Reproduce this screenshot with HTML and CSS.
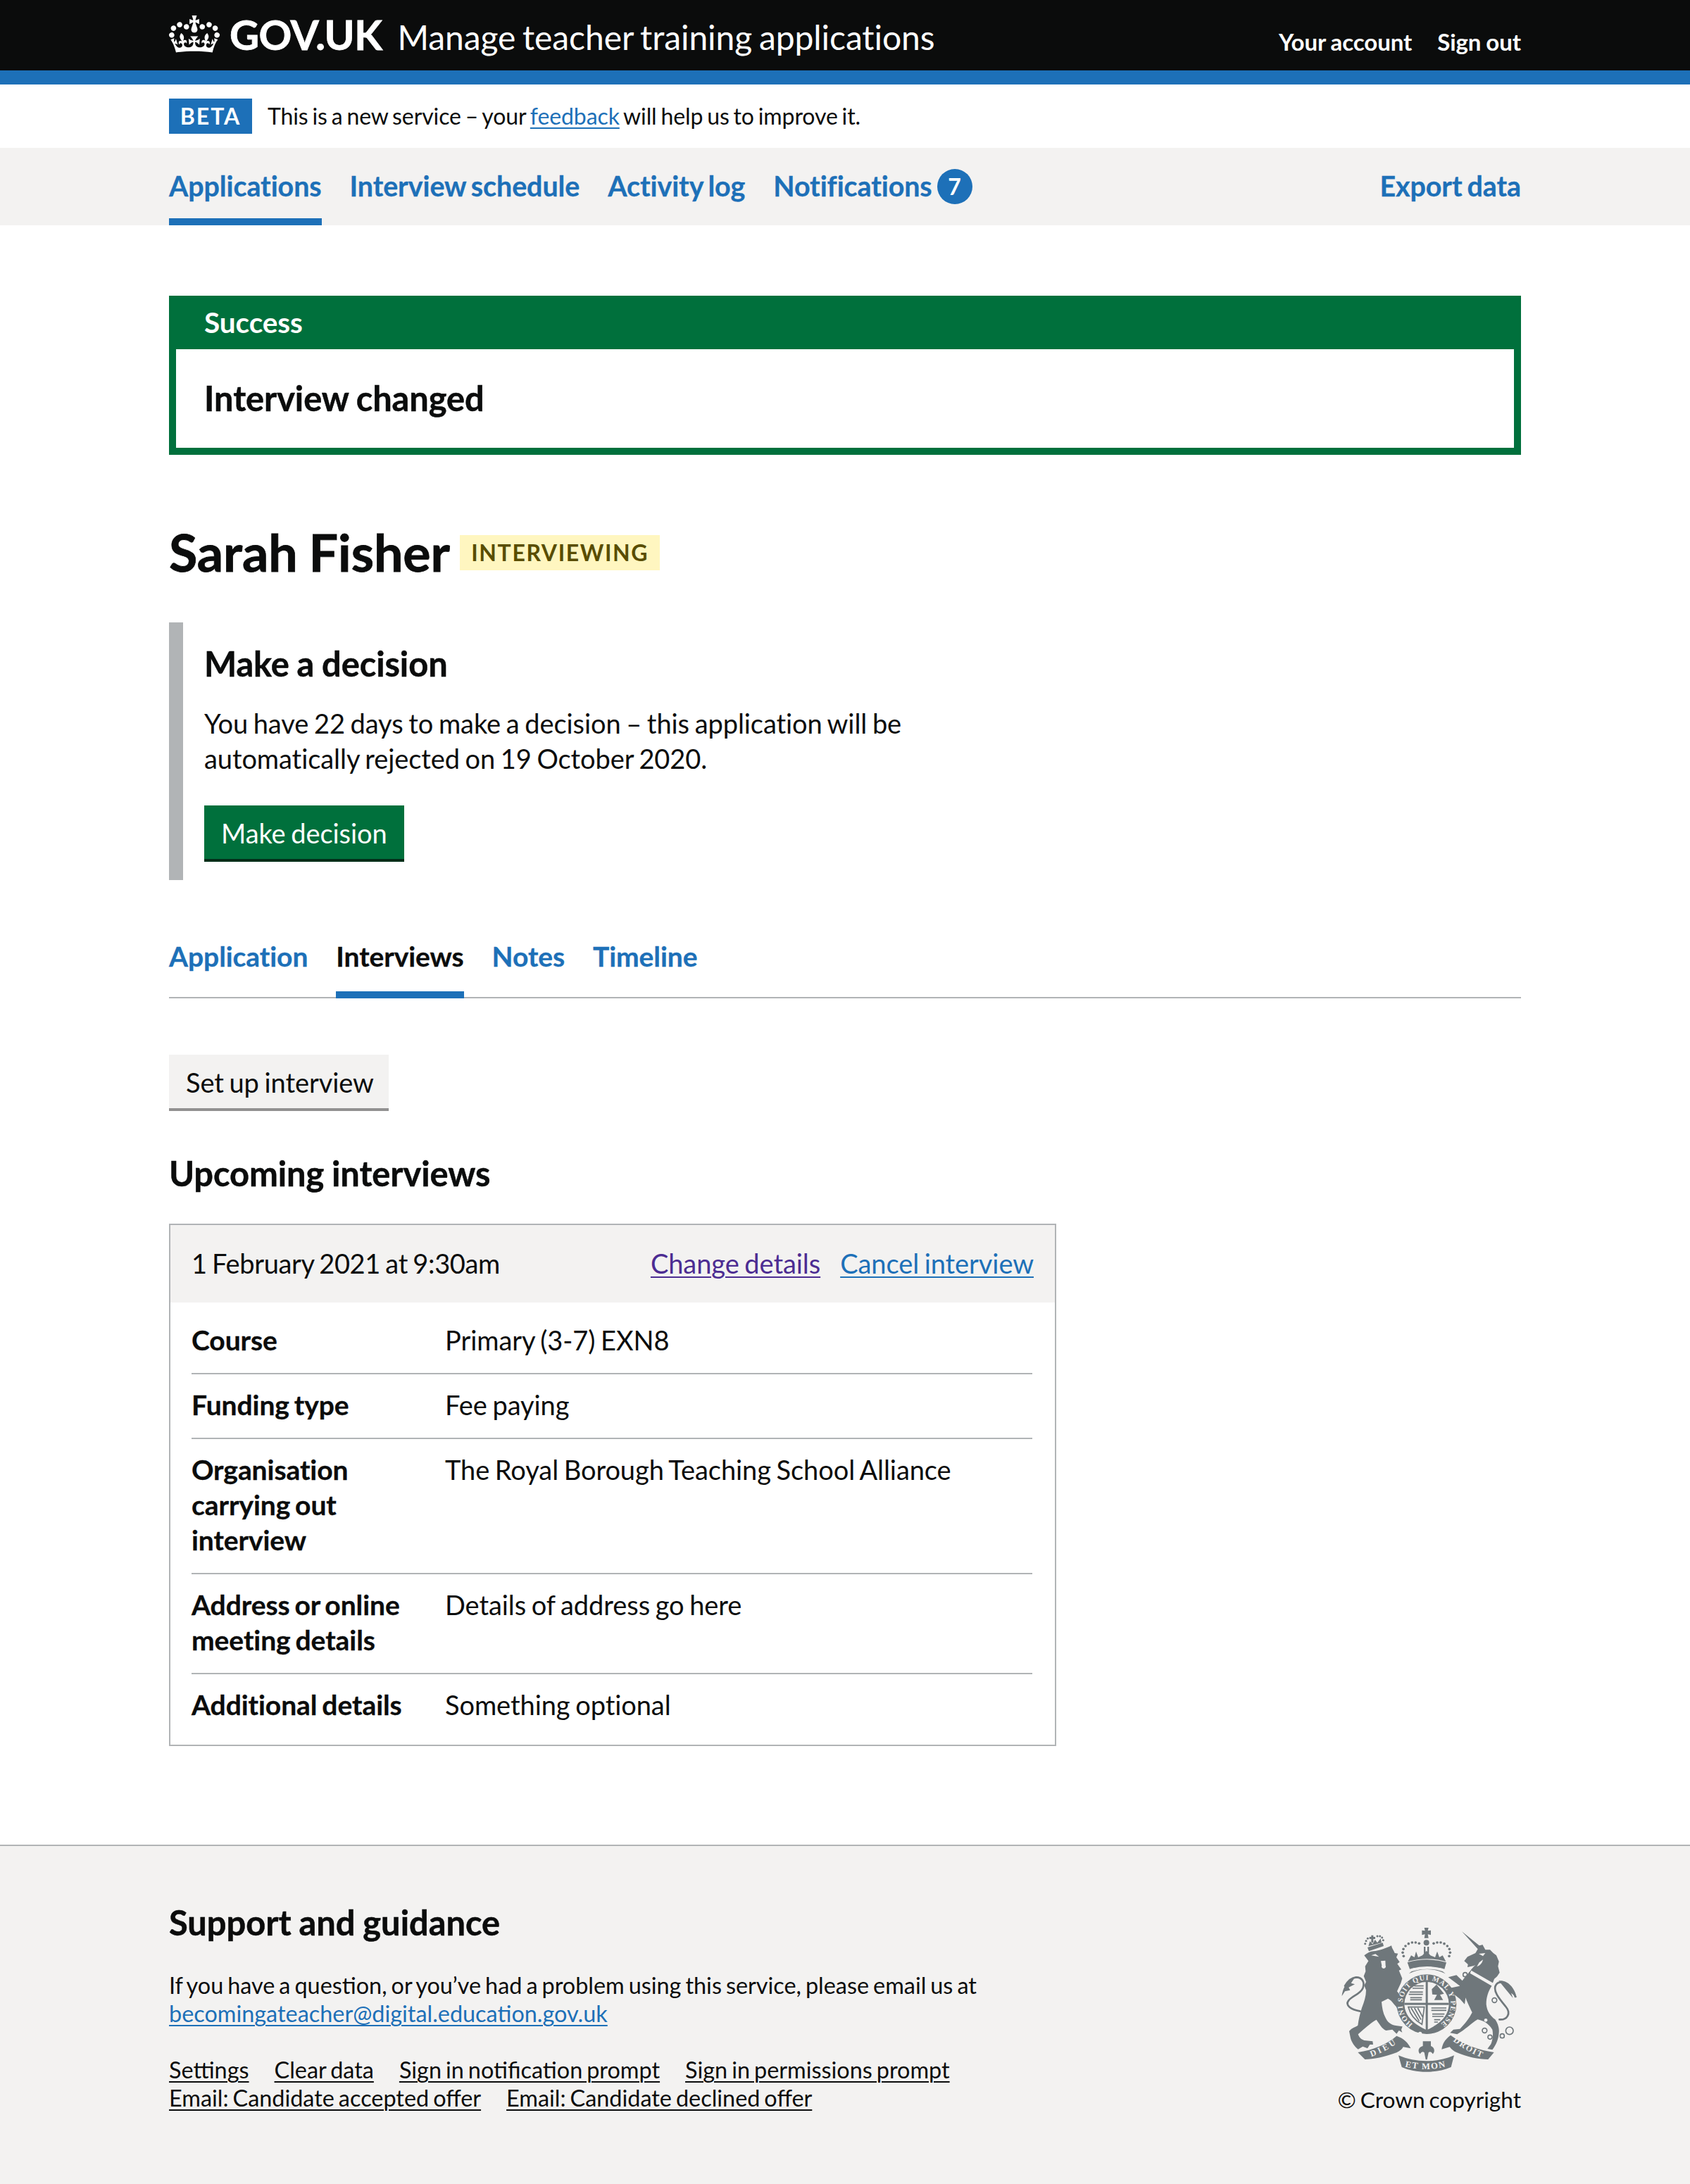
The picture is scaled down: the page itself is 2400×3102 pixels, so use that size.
FILE: index.html
```html
<!DOCTYPE html>
<html lang="en">
<head>
<meta charset="utf-8">
<title>Manage teacher training applications</title>
<link rel="stylesheet" href="styles.css">
</head>
<body>
<header class="header">
  <div class="wrap header-row">
    <div class="brand">
      <svg class="crown" viewBox="0 0 132 97" aria-hidden="true"><path fill="#fff" fill-rule="evenodd" d="M25 30.2c3.5 1.5 7.7-.2 9.1-3.7 1.5-3.6-.2-7.8-3.9-9.2-3.6-1.4-7.6.3-9.1 3.9-1.4 3.5.3 7.5 3.9 9zM9 39.5c3.6 1.5 7.8-.2 9.2-3.7 1.5-3.6-.2-7.8-3.9-9.1-3.6-1.5-7.6.2-9.1 3.8-1.4 3.5.3 7.5 3.8 9zM4.4 57.2c3.5 1.5 7.7-.2 9.1-3.8 1.5-3.6-.2-7.7-3.9-9.1-3.5-1.5-7.6.3-9.1 3.8-1.4 3.5.3 7.6 3.9 9.1zm38.3-21.4c3.5 1.5 7.7-.2 9.1-3.8 1.5-3.6-.2-7.7-3.9-9.1-3.6-1.5-7.6.3-9.1 3.8-1.3 3.6.4 7.7 3.9 9.1zm64.4-5.6c-3.6 1.5-7.8-.2-9.1-3.7-1.5-3.6.2-7.8 3.8-9.2 3.6-1.4 7.7.3 9.2 3.9 1.3 3.5-.4 7.5-3.9 9zm15.9 9.3c-3.6 1.5-7.7-.2-9.1-3.7-1.5-3.6.2-7.8 3.7-9.1 3.6-1.5 7.7.2 9.2 3.8 1.5 3.5-.3 7.5-3.8 9zm4.7 17.7c-3.6 1.5-7.8-.2-9.2-3.8-1.5-3.6.2-7.7 3.9-9.1 3.6-1.5 7.7.3 9.2 3.8 1.3 3.5-.4 7.6-3.9 9.1zM89.3 35.8c-3.6 1.5-7.8-.2-9.2-3.8-1.4-3.6.2-7.7 3.9-9.1 3.6-1.5 7.7.3 9.2 3.8 1.4 3.6-.3 7.7-3.9 9.1zM69.7 17.7l8.9 4.7V9.3l-8.9 2.8c-.2-.3-.5-.6-.9-.9L72.4 0H59.6l3.5 11.2c-.3.3-.6.5-.9.9l-8.8-2.8v13.1l8.8-4.7c.3.3.6.7.9.9l-5 15.4v.1c-.2.8-.4 1.6-.4 2.4 0 4.1 3.1 7.5 7 8.1h.2c.3 0 .7.1 1 .1.4 0 .7 0 1-.1h.2c4-.6 7.1-4.1 7.1-8.1 0-.8-.1-1.7-.4-2.4V34l-5.1-15.4c.4-.2.7-.6 1-.9zM66 92.8c16.9 0 32.8 1.1 47.1 3.2 4-16.9 8.9-26.7 14-33.5l-9.6-3.4c1 4.9 1.1 7.2 0 10.2-1.5-1.4-3-4.3-4.2-8.7L108.6 76c2.8-2 5-3.2 7.5-3.3-4.4 9.4-10 11.9-13.6 11.2-4.3-.8-6.3-4.6-5.6-7.9 1-4.7 5.7-5.9 8-.5 4.3-8.7-3-11.4-7.6-8.8 7.1-7.2 7.9-13.5 2.1-21.1-8 6.1-8.1 12.3-4.5 20.8-4.7-5.4-12.1-2.5-9.5 6.2 3.4-5.2 7.9-2 7.2 3.1-.6 4.3-6.4 7.8-13.5 7.2-10.3-.9-10.9-8-11.2-13.8 2.5-.5 7.1 1.8 11 7.3L80.2 60c-4.1 4.4-8 5.3-12.3 5.4 1.4-4.4 8-11.6 8-11.6H55.5s6.4 7.2 7.9 11.6c-4.2-.1-8-1-12.3-5.4l1.4 16.4c3.9-5.5 8.5-7.7 10.9-7.3-.3 5.8-.9 12.8-11.1 13.8-7.2.6-12.9-2.9-13.5-7.2-.7-5 3.8-8.3 7.1-3.1 2.7-8.7-4.6-11.6-9.4-6.2 3.7-8.5 3.6-14.7-4.6-20.8-5.8 7.6-5 13.9 2.2 21.1-4.7-2.6-11.9.1-7.7 8.8 2.3-5.5 7.1-4.2 8.1.5.7 3.3-1.3 7.1-5.7 7.9-3.5.7-9-1.8-13.5-11.2 2.5.1 4.7 1.3 7.5 3.3l-4.7-15.4c-1.2 4.4-2.7 7.2-4.3 8.7-1.1-3-.9-5.3 0-10.2l-9.5 3.4c5 6.9 9.9 16.7 14 33.5 14.8-2.1 30.8-3.2 47.7-3.2z"/></svg>
      <span class="logotype">GOV.UK</span>
      <span class="service">Manage teacher training applications</span>
    </div>
    <div class="account"><a href="#">Your account</a><a href="#">Sign out</a></div>
  </div>
</header>
<div class="stripe"></div>
<div class="wrap phase">
  <strong class="beta">BETA</strong>
  <span>This is a new service – your <a class="link" href="#">feedback</a> will help us to improve it.</span>
</div>
<nav class="nav">
  <div class="wrap nav-row">
    <a class="nav-item nav-active" href="#">Applications</a>
    <a class="nav-item" href="#">Interview schedule</a>
    <a class="nav-item" href="#">Activity log</a>
    <a class="nav-item" href="#">Notifications <span class="count">7</span></a>
    <a class="nav-item nav-end" href="#">Export data</a>
  </div>
</nav>
<main class="wrap main">
  <section class="banner">
    <div class="banner-title">Success</div>
    <div class="banner-body">Interview changed</div>
  </section>
  <h1 class="name">Sarah Fisher <strong class="tag">INTERVIEWING</strong></h1>
  <section class="decision">
    <h2 class="h-m">Make a decision</h2>
    <p class="decision-text">You have 22 days to make a decision – this application will be automatically rejected on 19 October 2020.</p>
    <a class="btn btn-green" href="#">Make decision</a>
  </section>
  <div class="tabs">
    <a class="tab" href="#">Application</a>
    <a class="tab tab-active" href="#">Interviews</a>
    <a class="tab" href="#">Notes</a>
    <a class="tab" href="#">Timeline</a>
  </div>
  <a class="btn btn-grey" href="#">Set up interview</a>
  <h2 class="h-m upcoming">Upcoming interviews</h2>
  <section class="card">
    <div class="card-head">
      <span class="card-date">1 February 2021 at 9:30am</span>
      <span class="card-actions"><a class="visited" href="#">Change details</a><a class="link" href="#">Cancel interview</a></span>
    </div>
    <dl class="rows">
      <div class="row"><dt>Course</dt><dd>Primary (3-7) EXN8</dd></div>
      <div class="row"><dt>Funding type</dt><dd>Fee paying</dd></div>
      <div class="row"><dt>Organisation carrying out interview</dt><dd>The Royal Borough Teaching School Alliance</dd></div>
      <div class="row"><dt>Address or online meeting details</dt><dd>Details of address go here</dd></div>
      <div class="row"><dt>Additional details</dt><dd>Something optional</dd></div>
    </dl>
  </section>
</main>
<footer class="footer">
  <div class="wrap footer-row">
    <div class="footer-main">
      <h2 class="h-m">Support and guidance</h2>
      <p class="footer-text">If you have a question, or you’ve had a problem using this service, please email us at <a class="link" href="#">becomingateacher@digital.education.gov.uk</a></p>
      <ul class="footer-links">
        <li><a href="#">Settings</a></li>
        <li><a href="#">Clear data</a></li>
        <li><a href="#">Sign in notification prompt</a></li>
        <li><a href="#">Sign in permissions prompt</a></li>
        <li><a href="#">Email: Candidate accepted offer</a></li>
        <li><a href="#">Email: Candidate declined offer</a></li>
      </ul>
    </div>
    <div class="footer-side">
      <svg class="crest" viewBox="120 105 780 630" aria-hidden="true">
        <g class="crest-dark">
          <!-- lion body -->
          <path d="M232 232 C245 222 258 214 272 214 C295 212 325 202 348 190 C350 203 358 210 362 222 L376 224 L369 240 L383 260 L373 268 L390 292 L380 296 L394 330 L388 350 L372 385 C385 400 392 425 404 445 L396 472 L386 462 L378 470 L368 450 C355 435 345 420 333 416 L306 430 C308 455 312 478 322 496 C330 515 345 530 372 532 L395 535 L390 548 L394 560 L380 552 L370 566 L352 548 L325 552 C308 545 298 525 284 506 C270 512 250 530 228 548 L206 568 C210 580 218 590 232 594 L268 598 L270 612 L256 612 L246 628 L226 620 L206 632 C190 620 178 600 174 585 L168 555 C178 540 195 538 205 530 C208 505 214 480 222 455 C232 430 240 405 240 380 L232 360 L240 345 L230 320 L238 300 L236 278 L250 256 Z"/>
          <!-- lion tail -->
          <path class="crest-line" d="M215 470 C175 462 150 445 165 425 C178 405 215 398 226 372 C236 345 222 325 198 325 C175 327 160 345 150 362"/>
          <path d="M137 405 C140 380 150 345 195 322 L176 350 L192 355 L166 368 L172 380 L150 385 Z"/>
          <!-- lion crown -->
          <path d="M246 198 L311 178 L315 192 L252 214 Z"/>
          <path d="M250 193 L256 172 L268 184 L278 165 L288 178 L302 160 L306 178 Z"/>
          <path d="M262 146 H271 V153 H279 V162 H271 V178 H262 V162 H254 V153 H262 Z"/>
          <g>
            <circle cx="236" cy="182" r="4.5"/><circle cx="240" cy="170" r="4.5"/><circle cx="247" cy="160" r="4.5"/><circle cx="288" cy="150" r="4.5"/><circle cx="299" cy="150" r="4.5"/><circle cx="308" cy="156" r="4.5"/><circle cx="313" cy="167" r="4.5"/>
          </g>
          <!-- unicorn body -->
          <path d="M648 130 L722 190 L730 188 L736 186 L748 208 L768 208 L782 222 L795 232 L806 258 L802 278 L809 305 L798 322 L786 332 L775 362 C760 385 752 410 752 440 C755 470 770 490 790 505 C800 520 808 540 806 560 C804 590 795 610 778 634 L757 630 L772 610 C780 590 782 570 778 548 C760 520 740 510 715 505 C690 520 660 550 628 568 L598 562 L612 548 L640 545 C660 525 680 500 692 475 C680 450 668 425 664 412 L660 440 L640 418 L612 395 L594 372 L640 362 L610 340 L590 325 L625 316 L650 340 C665 318 680 305 688 292 C700 278 712 268 700 276 L672 282 L674 270 L658 256 L672 238 L706 222 L716 205 Z"/>
          <!-- unicorn tail and chain -->
          <path class="crest-line" d="M876 408 C858 352 815 335 795 355 C775 380 810 420 835 450 C860 480 840 508 808 505"/>
          <path d="M805 340 C840 335 872 365 882 412 L858 392 L866 414 L838 380 Z"/>
          <g class="crest-ring">
            <circle cx="662" cy="314" r="9"/><circle cx="652" cy="398" r="9"/>
            <circle cx="745" cy="552" r="10"/><circle cx="768" cy="580" r="9"/>
            <circle cx="820" cy="575" r="9"/><circle cx="851" cy="553" r="16"/>
            <circle cx="787" cy="423" r="10"/>
          </g>
          <!-- central crown -->
          <path d="M416 262 Q500 238 582 262 L574 290 Q500 268 426 290 Z"/>
          <path d="M418 258 L432 232 L446 240 L453 215 L462 240 L480 232 L497 212 L514 232 L534 240 L543 215 L552 240 L566 232 L580 258 Q500 235 418 258 Z"/>
          <path d="M486 195 H493 V224 H486 Z M501 195 H508 V224 H501 Z"/>
          <path d="M488 114 H506 L503 127 L516 125 V145 L503 142 L506 158 H488 L491 142 L478 145 V125 L491 127 Z"/>
          <circle cx="497" cy="178" r="12"/>
          <g>
            <circle cx="400" cy="235" r="5.5"/><circle cx="396" cy="220" r="5.5"/><circle cx="399" cy="205" r="5.5"/><circle cx="408" cy="192" r="5.5"/><circle cx="421" cy="182" r="5.5"/><circle cx="436" cy="177" r="5.5"/><circle cx="451" cy="177" r="5.5"/><circle cx="466" cy="181" r="5.5"/>
            <circle cx="528" cy="181" r="5.5"/><circle cx="543" cy="177" r="5.5"/><circle cx="558" cy="177" r="5.5"/><circle cx="573" cy="182" r="5.5"/><circle cx="586" cy="192" r="5.5"/><circle cx="595" cy="205" r="5.5"/><circle cx="598" cy="220" r="5.5"/><circle cx="594" cy="235" r="5.5"/>
          </g>
          <path d="M422 310 Q500 272 578 310 L566 300 Q500 280 434 300 Z"/>
          <!-- garter -->
          <circle cx="498" cy="440" r="127"/>
          <!-- ribbon -->
          <path d="M205 645 C270 635 330 610 370 575 C400 585 420 605 430 628 L398 622 C392 635 380 640 372 645 C320 665 270 675 235 675 Z"/>
          <path d="M378 658 C450 690 545 690 615 658 L602 708 C540 735 450 735 392 708 Z"/>
          <path d="M785 645 C720 635 650 610 600 572 C575 590 565 610 562 632 L596 622 C605 635 615 640 625 645 C670 665 720 675 760 675 Z"/>
          <!-- fleur -->
          <path d="M482 598 H516 V618 C530 622 536 640 524 652 C518 642 512 640 506 646 L500 676 H494 L488 646 C482 640 476 642 470 652 C458 640 464 622 482 618 Z"/>
        </g>
        <!-- lion face and haunch highlights -->
        <g class="crest-light">
          <path d="M262 232 L295 238 L280 226 Z"/>
          <path d="M303 256 L322 254 L323 275 A9 9 0 1 1 307 275 Z"/>
          <path d="M720 225 L748 222 L738 235 Z"/>
          <path d="M738 250 C735 265 725 275 712 280 L722 262 Z"/>
          <!-- unicorn collar -->
          <path d="M688 296 L782 350 L776 362 L683 308 Z"/>
          <circle cx="777" cy="467" r="7"/><circle cx="750" cy="508" r="7"/>
          <!-- shield -->
          <path d="M403 440 A95 95 0 0 1 593 440 C590 495 550 525 498 550 C446 525 406 495 403 440 Z"/>
          <circle cx="470" cy="565" r="8"/><circle cx="510" cy="576" r="8"/>
        </g>
        <g class="crest-dark">
          <rect x="494" y="345" width="9" height="205"/>
          <rect x="403" y="434" width="190" height="9"/>
          <path class="crest-thin" d="M445 362 H485 M438 372 H485 M425 388 H482 M422 398 H482 M428 412 H478 M428 421 H478 M518 456 H582 M518 466 H582 M522 482 H574 M522 492 H570 M530 506 H556 M530 516 H546"/>
          <path d="M520 376 L540 356 L560 380 L572 395 L555 400 L568 422 H530 L542 400 L522 398 Z"/>
          <path class="crest-thin" d="M420 452 C430 490 450 510 478 526 L488 452 Z M432 456 L466 512 M446 456 L474 506 M460 456 L482 496"/>
        </g>
        <path id="c-ring" fill="none" d="M439 524 A103 103 0 1 1 557 524"/>
        <path id="c-left" fill="none" d="M262 664 Q325 640 372 606"/>
        <path id="c-mid" fill="none" d="M405 706 Q495 728 590 704"/>
        <path id="c-right" fill="none" d="M610 596 Q665 640 735 668"/>
        <g class="crest-text">
          <text class="t-ring"><textPath href="#c-ring" textLength="520" lengthAdjust="spacing">HONI SOIT QUI MAL Y PENSE</textPath></text>
          <text class="t-side"><textPath href="#c-left" textLength="120">DIEU</textPath></text>
          <text class="t-mid"><textPath href="#c-mid" textLength="175">ET MON</textPath></text>
          <text class="t-side"><textPath href="#c-right" textLength="140">DROIT</textPath></text>
        </g>
      </svg>
      <a class="copyright" href="#">© Crown copyright</a>
    </div>
  </div>
</footer>
</body>
</html>
```
FILE: styles.css
```css
* { box-sizing: border-box; }
html, body { margin: 0; padding: 0; }
body { font-family: Lato, "Noto Sans", sans-serif; font-size: 38px; line-height: 50px; color: #0b0c0c; background: #fff; word-spacing: -2px; letter-spacing: -0.07px; }
a { color: inherit; text-decoration: none; }
.wrap { width: 1920px; margin: 0 auto; }
.link { color: #1d70b8; text-decoration: underline; text-decoration-thickness: 2px; text-underline-offset: 4px; }
.visited { color: #4c2c92; text-decoration: underline; text-decoration-thickness: 2px; text-underline-offset: 4px; }
.header { background: #0b0c0c; color: #fff; height: 100px; overflow: hidden; }
.header-row { display: flex; justify-content: space-between; height: 100px; }
.brand { display: flex; align-items: flex-start; }
.crown { width: 72px; height: 53px; margin-top: 22px; flex: none; }
.logotype { font-size: 58px; font-weight: 700; line-height: 98px; margin-left: 14px; letter-spacing: -0.5px; -webkit-text-stroke: 0.8px currentColor; }
.service { font-size: 48px; line-height: 106px; margin-left: 22px; word-spacing: -2.5px; }
.account { display: flex; gap: 36px; font-size: 33px; font-weight: 700; line-height: 40px; padding-top: 39px; word-spacing: -1px; }
.stripe { height: 20px; background: #1d70b8; }
.phase { height: 90px; display: flex; align-items: center; font-size: 32px; line-height: 40px; gap: 22px; word-spacing: -2.2px; letter-spacing: -0.1px; }
.beta { background: #1d70b8; color: #fff; height: 50px; width: 118px; display: flex; align-items: center; justify-content: center; font-size: 32px; letter-spacing: 2px; font-weight: 700; }
.nav { background: #f3f2f1; height: 110px; }
.nav-row { display: flex; gap: 40px; height: 110px; }
.nav-item { color: #1d70b8; font-weight: 700; font-size: 39.4px; padding-top: 29px; word-spacing: -2.5px; -webkit-text-stroke: 0.3px currentColor; }
.nav-active { box-shadow: inset 0 -10px 0 #1d70b8; }
.nav-end { margin-left: auto; }
.count { display: inline-block; vertical-align: top; width: 50px; height: 50px; margin-top: 1px; border-radius: 50%; background: #1d70b8; color: #fff; text-align: center; font-size: 32px; line-height: 50px; -webkit-text-stroke: 0; }
.main { padding-top: 100px; padding-bottom: 140px; }
.banner { border: 10px solid #00703c; border-top: 0; height: 226px; }
.banner-title { background: #00703c; color: #fff; font-weight: 700; font-size: 40.5px; height: 76px; line-height: 76px; margin: 0 -10px; padding-left: 50px; }
.banner-body { font-size: 48.8px; font-weight: 700; line-height: 60px; padding: 39px 0 0 40px; word-spacing: -1px; -webkit-text-stroke: 0.5px currentColor; }
.name { margin: 100px 0 0; font-size: 73.6px; line-height: 76px; font-weight: 700; height: 80px; -webkit-text-stroke: 0.8px currentColor; }
.tag { display: inline-block; vertical-align: top; margin-top: 14px; height: 50px; padding: 0 16px; background: #fff6c0; color: #594d00; font-size: 32px; line-height: 50px; letter-spacing: 1.6px; font-weight: 700; -webkit-text-stroke: 0; }
.decision { margin-top: 58px; border-left: 20px solid #b1b4b6; padding: 30px 0 26px 30px; height: 366px; }
.h-m { margin: 0; padding-bottom: 4px; font-size: 48.8px; line-height: 56px; font-weight: 700; word-spacing: -1px; -webkit-text-stroke: 0.5px currentColor; }
.decision-text { margin: 28px 0 0; width: 1030px; }
.btn { display: inline-block; line-height: 50px; padding: 14px 24px 12px; height: 80px; white-space: nowrap; }
.btn-green { margin-top: 42px; background: #00703c; color: #fff; box-shadow: inset 0 -4px 0 #002d18; }
.btn-grey { margin-top: 80px; background: #f3f2f1; color: #0b0c0c; box-shadow: inset 0 -4px 0 #929191; display: block; width: 312px; }
.tabs { margin-top: 58px; display: flex; gap: 40px; height: 110px; border-bottom: 2px solid #b1b4b6; }
.tab { color: #1d70b8; font-weight: 700; font-size: 39px; padding-top: 25px; height: 110px; word-spacing: -2.5px; -webkit-text-stroke: 0.3px currentColor; }
.tab-active { color: #0b0c0c; box-shadow: inset 0 -10px 0 #1d70b8; }
.upcoming { margin-top: 60px; }
.card { margin-top: 40px; width: 1260px; border: 2px solid #b1b4b6; }
.card-head { background: #f3f2f1; height: 110px; display: flex; justify-content: space-between; align-items: center; padding: 0 30px 3px; }
.card-date { letter-spacing: -0.35px; }
.card-actions { display: flex; gap: 28px; }
.rows { margin: 0; padding: 28px 32px 0 30px; }
.row { display: flex; border-bottom: 2px solid #b1b4b6; padding-bottom: 22px; margin-bottom: 18px; }
.row:last-child { border-bottom: 0; margin-bottom: 0; padding-bottom: 32px; }
.row dt { width: 360px; flex: none; font-weight: 700; font-size: 39px; word-spacing: -2.5px; -webkit-text-stroke: 0.3px currentColor; }
.row dd { margin: 0; }
.footer { background: #f3f2f1; border-top: 2px solid #b1b4b6; height: 482px; padding-top: 80px; font-size: 32.4px; line-height: 40px; word-spacing: -2.3px; letter-spacing: 0; }
.footer .h-m { word-spacing: -1px; }
.footer-row { display: flex; justify-content: space-between; }
.footer-text { margin: 38px 0 0; width: 1180px; }
.footer-links { list-style: none; margin: 40px 0 0; padding: 0; display: flex; flex-wrap: wrap; width: 1180px; column-gap: 36px; }
.footer-links a { text-decoration: underline; text-decoration-thickness: 2px; text-underline-offset: 4px; }
.footer-side { display: flex; flex-direction: column; align-items: flex-end; }
.crest { width: 260px; height: 210px; display: block; margin-top: 33px; }
.crest-dark { fill: #6f777b; }
.crest-light { fill: #f3f2f1; }
.crest-line { fill: none; stroke: #6f777b; stroke-width: 8; stroke-linecap: round; }
.crest-ring circle { fill: none; stroke: #6f777b; stroke-width: 5; }
.crest-thin { fill: none; stroke: #6f777b; stroke-width: 5; }
.crest-text { fill: #f3f2f1; font-family: "Liberation Serif", serif; font-weight: 700; word-spacing: 0; }
.t-ring { font-size: 31px; }
.t-side { font-size: 36px; }
.t-mid { font-size: 38px; }
.copyright { display: block; margin-top: 17px; font-size: 31.6px; }
```
